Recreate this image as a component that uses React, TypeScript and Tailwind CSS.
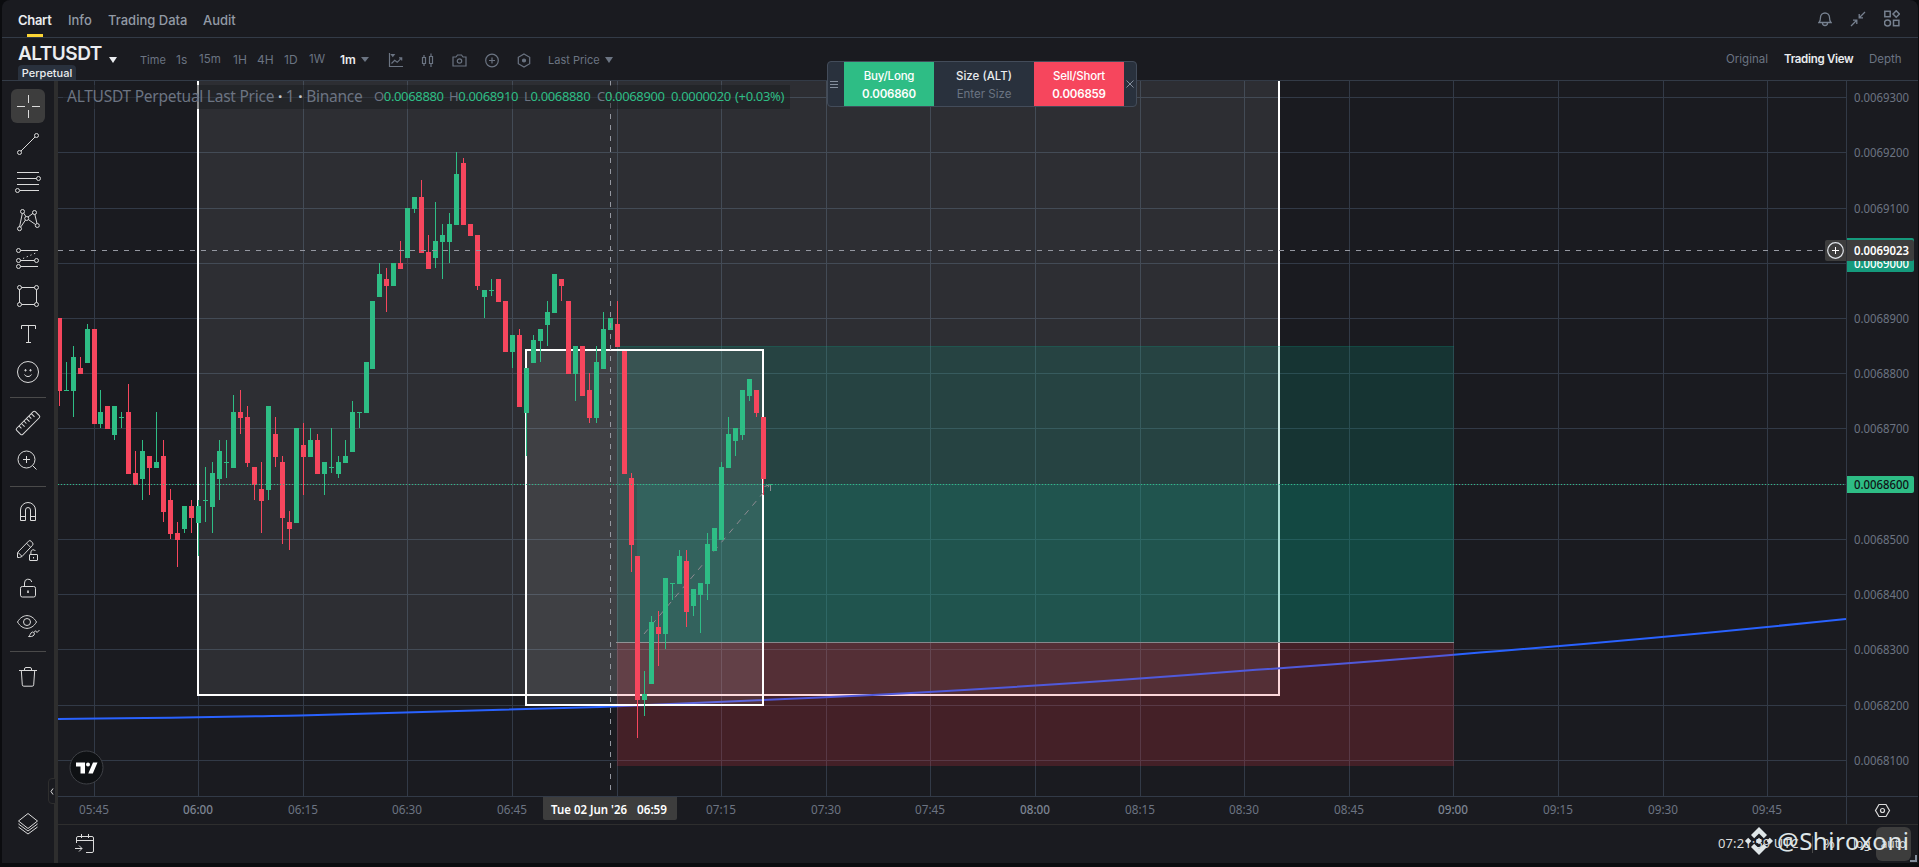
import React from 'react';

const UP = '#2ebd85';
const DOWN = '#f6465d';
const GRID = '#323a47';

// [open, high, low, close] in ticks of 0.000001 above 0.0068000, one candle per minute from 05:40
const CANDLES: number[][] = [
  [90, 90, 74, 77], [77, 82, 77, 77], [77, 85, 72, 83], [81, 83, 80, 80], [82, 89, 82, 88],
  [88, 88, 71, 71], [71, 77, 70, 73], [74, 74, 70, 70], [69, 74, 68, 74], [72, 73, 70, 72],
  [73, 78, 62, 62], [62, 66, 60, 60], [61, 68, 57, 66], [65, 65, 58, 63], [63, 73, 63, 64],
  [65, 68, 53, 55], [57, 59, 50, 51], [51, 53, 45, 50], [52, 56, 51, 56], [56, 57, 51, 54],
  [53, 57, 47, 56], [57, 63, 53, 57], [56, 64, 51, 62], [61, 68, 57, 66], [64, 68, 61, 64],
  [63, 76, 63, 73], [73, 77, 69, 72], [72, 74, 63, 64], [63, 63, 57, 60], [59, 64, 51, 57],
  [59, 74, 57, 74], [69, 72, 63, 65], [64, 65, 49, 54], [53, 55, 48, 52], [53, 70, 53, 70],
  [67, 71, 58, 65], [65, 70, 65, 68], [68, 69, 62, 62], [62, 64, 58, 64], [63, 70, 62, 63],
  [62, 65, 61, 64], [64, 68, 64, 65], [66, 75, 66, 73], [73, 73, 70, 73], [73, 82, 73, 82],
  [81, 93, 81, 93], [94, 100, 94, 98], [97, 99, 91, 96], [96, 100, 96, 100], [100, 104, 99, 99],
  [101, 110, 101, 110], [110, 112, 109, 112], [112, 115, 102, 102], [102, 105, 99, 99], [101, 111, 99, 104],
  [104, 107, 97, 105], [104, 109, 100, 107], [107, 120, 107, 116], [118, 119, 107, 107], [107, 107, 105, 105],
  [105, 105, 95, 96], [94, 95, 90, 95], [95, 97, 94, 95], [97, 97, 93, 93], [93, 93, 84, 84],
  [84, 87, 81, 87], [87, 88, 74, 74], [73, 81, 65, 81], [82, 87, 82, 86], [86, 88, 82, 88],
  [89, 93, 85, 91], [91, 98, 91, 98], [97, 97, 93, 96], [93, 93, 80, 80], [80, 85, 75, 85],
  [85, 85, 76, 76], [77, 80, 71, 72], [72, 85, 71, 82], [81, 91, 81, 88], [88, 90, 88, 90],
  [89, 93, 85, 85], [84, 84, 62, 62], [61, 62, 44, 49], [47, 47, 14, 21], [21, 26, 18, 22],
  [24, 36, 24, 35], [34, 37, 27, 33], [33, 43, 30, 43], [42, 42, 39, 42], [42, 48, 42, 47],
  [46, 48, 34, 37], [38, 41, 36, 41], [40, 42, 33, 42], [42, 51, 39, 49], [48, 52, 48, 52],
  [50, 64, 50, 63], [63, 72, 63, 69], [68, 70, 65, 70], [69, 77, 68, 77], [76, 79, 75, 79],
  [77, 77, 72, 73], [72, 72, 58, 61], [60, 60, 60, 60],
];

const PRICES = [130, 120, 110, 100, 90, 80, 70, 60, 50, 40, 30, 20, 10];
const TIMES = [
  '05:45', '06:00', '06:15', '06:30', '06:45', '', '07:15', '07:30', '07:45',
  '08:00', '08:15', '08:30', '08:45', '09:00', '09:15', '09:30', '09:45',
];

const xAt = (minute: number) => Math.ceil(58.156 + 6.974 * minute);
const yAt = (tick: number) => Math.round(97.1 + (130 - tick) * 5.523);
const formatPrice = (tick: number) => `0.00${68000 + tick * 10}`;

const Chart: React.FC = () => (
  <svg className="block h-[715px] w-[1788px]" viewBox="58 81 1788 715" shapeRendering="crispEdges">
    <rect x="58" y="81" width="1788" height="715" fill="#1a1b20" />

    {PRICES.map((p) => (
      <rect key={p} x="58" y={yAt(p)} width="1788" height="1" fill={GRID} />
    ))}
    {TIMES.map((_, i) => (
      <rect key={i} x={xAt(5 + i * 15)} y="81" width="1" height="715" fill={GRID} />
    ))}

    {/* outer range box */}
    <rect x="198" y="81" width="1081" height="614" fill="#fff" fillOpacity="0.088" />
    <path d="M198 81V695H1279V81" fill="none" stroke="#fff" strokeWidth="2" />

    {/* moving average */}
    <path
      d="M58 719C150 718.5 220 717 300 715.5C400 713 500 710.5 600 707C680 704 750 700.5 820 697.5C960 691 1100 682 1240 671C1320 665.500 1400 659.500 1480 652.500C1600 643 1720 632 1846 619"
      fill="none"
      stroke="#2962ff"
      strokeWidth="2"
      shapeRendering="auto"
    />

    {/* long position */}
    <rect x="617" y="346" width="837" height="296" fill="#089981" fillOpacity="0.2" />
    <rect x="617" y="346" width="837" height="1" fill="#089981" fillOpacity="0.2" />
    <rect x="637" y="484" width="817" height="158" fill="#089981" fillOpacity="0.2" />
    <rect x="617" y="643" width="837" height="123" fill="#f23645" fillOpacity="0.2" />
    <rect x="616" y="642" width="838" height="1" fill="#87888c" />

    {/* inner range box */}
    <rect x="526" y="350" width="237" height="355" fill="#fff" fillOpacity="0.088" />
    <rect x="526" y="350" width="237" height="355" fill="none" stroke="#fff" strokeWidth="2" />
    <path d="M644 634L769 486" stroke="#8f8b92" strokeDasharray="6 6" shapeRendering="auto" />
    <path d="M764.500 486.500L770.500 484.500V491" fill="none" stroke="#8f8b92" shapeRendering="auto" />

    {CANDLES.map(([open, high, low, close], i) => {
      const x = xAt(i);
      const color = close >= open ? UP : DOWN;
      const top = yAt(Math.max(open, close));
      const bottom = yAt(Math.min(open, close)) + 1;
      return (
        <g key={i} fill={color}>
          <rect x={x} y={yAt(high)} width="1" height={yAt(low) - yAt(high)} />
          <rect x={x - 2} y={top} width="5" height={bottom - top} />
        </g>
      );
    })}

    <path d="M58 484.500H1846" stroke={UP} strokeDasharray="1 2" />
    <path d="M58 250.500H1846" stroke="#9598a1" strokeDasharray="5 6" />
    <path d="M610.500 81V796" stroke="#9598a1" strokeDasharray="5 6" />
  </svg>
);

const PriceAxis: React.FC = () => (
  <svg
    className="block h-[715px] w-[72px] overflow-visible"
    viewBox="1846 81 72 715"
    fontFamily="'Noto Sans', sans-serif"
    fontSize="12"
  >
    <rect x="1846" y="81" width="1" height="715" fill={GRID} />
    {PRICES.filter((p) => p !== 100 && p !== 60).map((p) => (
      <text key={p} x="1854" y={yAt(p) + 4.5} fill="#6c7482" textLength="55" lengthAdjust="spacingAndGlyphs">
        {formatPrice(p)}
      </text>
    ))}
    <path d="M1847 238h65a2 2 0 0 1 2 2v30a2 2 0 0 1-2 2h-65z" fill="#159a7c" />
    <text x="1854" y="268" fill="#fff" fontWeight="500" textLength="55" lengthAdjust="spacingAndGlyphs">0.0069000</text>
    <rect x="1825" y="240" width="89" height="21" rx="2" fill="#3d3d3d" />
    <rect x="1846" y="240" width="1" height="21" fill="#2c2f35" />
    <circle cx="1835.500" cy="250.500" r="7.800" fill="none" stroke="#dfe3e8" strokeWidth="1.200" />
    <path d="M1832 250.500h7M1835.500 247v7" stroke="#fff" />
    <text x="1854" y="255" fill="#fff" fontWeight="600" textLength="55" lengthAdjust="spacingAndGlyphs">0.0069023</text>
    <path d="M1847 476h65a2 2 0 0 1 2 2v13a2 2 0 0 1-2 2h-65z" fill={UP} />
    <text x="1854" y="489" fill="#101215" fontWeight="500" textLength="55" lengthAdjust="spacingAndGlyphs">0.0068600</text>
  </svg>
);

const TimeAxis: React.FC = () => (
  <svg
    className="block h-[28px] w-[1860px]"
    viewBox="58 796 1860 28"
    fontFamily="'Noto Sans', sans-serif"
    fontSize="12"
  >
    <rect x="58" y="796" width="1860" height="1" fill={GRID} />
    <rect x="1846" y="796" width="1" height="28" fill={GRID} />
    {TIMES.map((t, i) => (
      <text
        key={i}
        x={xAt(5 + i * 15) - 15}
        y="814"
        fill={t.endsWith(':00') ? '#7d8593' : '#6c7482'}
        fontWeight={t.endsWith(':00') ? 500 : 400}
        textLength="30"
        lengthAdjust="spacingAndGlyphs"
      >
        {t}
      </text>
    ))}
    <path d="M543 797h134v21a2 2 0 0 1-2 2h-130a2 2 0 0 1-2-2z" fill="#3d3d3d" />
    <text x="551" y="814" fill="#fff" fontWeight="600" textLength="76" lengthAdjust="spacingAndGlyphs">Tue 02 Jun '26</text>
    <text x="637" y="814" fill="#fff" fontWeight="600" textLength="30" lengthAdjust="spacingAndGlyphs">06:59</text>
    <g fill="none" stroke="#dbdbdb" strokeWidth="1.200">
      <path d="M1879 804.500h7l3.500 6-3.500 6h-7l-3.500-6z" />
      <circle cx="1882.500" cy="810.500" r="2" />
    </g>
  </svg>
);

const Tool: React.FC<{ active?: boolean; children: React.ReactNode }> = ({ active, children }) => (
  <div className="flex h-[38px] w-full items-center justify-center">
    <div className={active ? 'flex h-[34px] w-[34px] items-center justify-center rounded-md bg-[#3d3d3d]' : 'flex'}>
      <svg width="28" height="28" viewBox="0 0 28 28" fill="none" stroke="#dbdbdb" strokeWidth="1">
        {children}
      </svg>
    </div>
  </div>
);

const Separator = () => (
  <div className="flex h-[13px] items-center justify-center">
    <div className="h-px w-[36px] bg-[#4a4a4a]" />
  </div>
);

const Toolbar: React.FC = () => (
  <div className="flex w-[52px] flex-col pt-[6px]">
    <Tool active>
      <path d="M14.500 3v8M14.500 18v8M3 14.500h8M18 14.500h8" />
    </Tool>
    <Tool>
      <path d="M7 21L21 7" />
      <circle cx="5.500" cy="22.500" r="2" />
      <circle cx="22.500" cy="5.500" r="2" />
    </Tool>
    <Tool>
      <path d="M3 4.500h22M3 10.500h19.500M3 16.500h22M6 22.500h19" />
      <circle cx="24.500" cy="10.500" r="2" />
      <circle cx="3.500" cy="22.500" r="2" />
    </Tool>
    <Tool>
      <path d="M5.500 21L8.300 7.500M9.800 7.200l2.200 3.600M14 11l5-3.700M20.800 8.300l2.200 9.200M21.500 18.500L14.300 13.500M11.500 14l-5 7.300" />
      <circle cx="8.500" cy="5.500" r="2" />
      <circle cx="20.500" cy="6.500" r="2" />
      <circle cx="12.700" cy="12.500" r="2" />
      <circle cx="5.500" cy="22.700" r="2" />
      <circle cx="23.300" cy="19.500" r="2" />
    </Tool>
    <Tool>
      <path d="M6.500 6.500H24M6.500 16.500H20.500M6.500 22.500H24" />
      <path d="M9 14.500L23 8.500" strokeDasharray="1.300 2.700" />
      <circle cx="4.500" cy="6.500" r="2" />
      <circle cx="4.500" cy="16.500" r="2" />
      <circle cx="4.500" cy="22.500" r="2" />
      <circle cx="22.500" cy="16.500" r="2" />
    </Tool>
    <Tool>
      <path d="M7.500 5.500h13M7.500 22.500h13M5.500 7.500v13M22.500 7.500v13" />
      <circle cx="5.500" cy="5.500" r="2" />
      <circle cx="22.500" cy="5.500" r="2" />
      <circle cx="5.500" cy="22.500" r="2" />
      <circle cx="22.500" cy="22.500" r="2" />
    </Tool>
    <Tool>
      <path d="M7.500 9V5.500h14V9M14.500 5.500v17M12 22.500h5" />
    </Tool>
    <Tool>
      <circle cx="14" cy="14" r="10.500" />
      <path d="M10.500 16.500c1.500 2.700 5.500 2.700 7 0" />
      <circle cx="11.500" cy="12.300" r="0.700" fill="#dbdbdb" />
      <circle cx="16.500" cy="12.300" r="0.700" fill="#dbdbdb" />
    </Tool>
    <Separator />
    <Tool>
      <g transform="rotate(-45 14 14)">
        <rect x="0.800" y="9.700" width="26.400" height="8.600" rx="1.500" />
        <path d="M5.500 9.700v3.500M9 9.700v4.500M12.500 9.700v3.500M16 9.700v4.500M19.500 9.700v3.500M23 9.700v4.500" />
      </g>
    </Tool>
    <Tool>
      <circle cx="12.500" cy="12.500" r="8.500" />
      <path d="M9 12.500h7M12.500 9v7M18.500 18.500l4 4" />
    </Tool>
    <Separator />
    <Tool>
      <path d="M6.500 22.500V12a7.500 7.500 0 0 1 15 0v10.500h-5V12a2.500 2.500 0 0 0-5 0v10.500zM6.500 18.500h5M16.500 18.500h5" />
    </Tool>
    <Tool>
      <path d="M3.500 21.500v-5L14.500 5.200a1.800 1.800 0 0 1 2.600 0l1.400 1.600a1.800 1.800 0 0 1 0 2.500L8 20.500l-2.500 1zM12.500 7.200l4 4M4 16.500l4.200 4" />
      <rect x="15.500" y="18.500" width="8" height="6" rx="0.500" />
      <path d="M16.900 18.500v-2.500a2.400 2.400 0 0 1 4.500-1M19.500 21v1.500" />
    </Tool>
    <Tool>
      <rect x="6.500" y="12.500" width="15" height="10.500" rx="1.800" />
      <path d="M10.500 12.500V9a3.700 3.700 0 0 1 7.300-1" />
      <path d="M14 16.500v2.500" strokeWidth="1.600" />
    </Tool>
    <Tool>
      <path d="M3.500 10c5-8.500 14-8.500 19 0c-5 8.500-14 8.500-19 0z" />
      <circle cx="13" cy="10" r="3.500" />
      <path d="M14.500 24.500c1.800-.3 1.500-4 4-4.500 1.600 0 2.400 1.600 1.500 3-1 1.500-3.500 1.800-5.500 1.500zM20 20.500l1.500-1.800 1.500 1.800 2.500-2.500" />
    </Tool>
    <Separator />
    <Tool>
      <path d="M5 7.500h18M10.500 7.500V6a1.500 1.500 0 0 1 1.500-1.500h4A1.500 1.500 0 0 1 17.500 6v1.500M7.300 7.500l1 14.300a1.500 1.500 0 0 0 1.500 1.400h8.400a1.500 1.500 0 0 0 1.500-1.400l1-14.300" />
    </Tool>
    <div className="mt-auto mb-[20px]">
      <Tool>
        <path d="M14 3.500l9.500 7.500L14 18.500 4.500 11zM4.800 13.700L4.500 14l9.500 7 9.500-7-.3-.3M4.500 17l9.500 7 9.500-7" />
      </Tool>
    </div>
  </div>
);

const OrderPanel: React.FC = () => (
  <div className="absolute top-[61px] left-[827px] z-10 flex h-[46px] w-[310px] overflow-hidden rounded border border-[#434c5a] bg-[#29313d] text-center text-[11.500px] leading-[18px] font-medium text-[#eaecef]">
    <div className="flex w-[16px] items-center pl-[2px]">
      <svg width="8" height="9" stroke="#848e9c"><path d="M0 1.500h8M0 4.500h8M0 7.500h8" /></svg>
    </div>
    <div className="w-[90px] bg-[#2ebd85] pt-[5px] text-white">
      <div className="tracking-[-0.2px]">Buy/Long</div>
      <div className="font-semibold tracking-[-0.2px]">0.006860</div>
    </div>
    <div className="w-[100px] pt-[5px]">
      <div>Size (ALT)</div>
      <div className="font-normal text-[#6b7482]">Enter Size</div>
    </div>
    <div className="w-[90px] bg-[#f6465d] pt-[5px] text-white">
      <div className="tracking-[-0.2px]">Sell/Short</div>
      <div className="font-semibold tracking-[-0.2px]">0.006859</div>
    </div>
    <div className="flex flex-1 items-center justify-center">
      <svg width="8" height="8" stroke="#848e9c"><path d="M.5.5l7 7M7.500.5l-7 7" /></svg>
    </div>
  </div>
);

const Legend: React.FC = () => (
  <div className="absolute top-[4px] left-[5px] flex h-[24px] w-[727px] items-center bg-[#1a1b20]/50 pl-[4px] font-['Noto_Sans',sans-serif] text-[13px] tracking-[-0.35px] whitespace-nowrap text-[#6c7482]">
    <span className="w-[307px] text-[15.500px] tracking-[-0.25px]">ALTUSDT Perpetual Last Price <b className="text-[#c5c9d0]">·</b> 1 <b className="text-[#c5c9d0]">·</b> Binance</span>
    <span className="w-[75px]">O<span className="text-[#2ebd85]">0.0068880</span></span>
    <span className="w-[75px]">H<span className="text-[#2ebd85]">0.0068910</span></span>
    <span className="w-[73px]">L<span className="text-[#2ebd85]">0.0068880</span></span>
    <span className="w-[74px]">C<span className="text-[#2ebd85]">0.0068900</span></span>
    <span className="w-[64px] text-[#2ebd85]">0.0000020</span>
    <span className="text-[#2ebd85]">(+0.03%)</span>
  </div>
);

const TopTabs: React.FC = () => (
  <div className="flex h-[38px] items-center border-b border-[#333b47] pl-[16px] text-[13px] font-medium text-[#929aa5]">
    <div className="relative flex h-full w-[50px] items-center pt-[5px] text-[#eaecef]">
      <span className="font-semibold tracking-[-0.3px]">Chart</span>
      <span className="absolute bottom-0 left-[9px] h-[3px] w-[16px] bg-[#fcd535]" />
    </div>
    <div className="w-[40px] pt-[5px]">Info</div>
    <div className="w-[95px] pt-[5px]">Trading Data</div>
    <div className="pt-[5px]">Audit</div>
    <div className="ml-auto flex items-center gap-[18px] pr-[18px]">
      <svg width="14" height="16" viewBox="0 0 14 16" fill="none" stroke="#76808f" strokeWidth="1.300">
        <path d="M1 11.500h12c-1.500-1.500-1.500-2.500-1.500-5a4.500 4.500 0 0 0-9 0c0 2.500 0 3.500-1.500 5zM4.500 12a2.500 2.500 0 0 0 5 0" />
      </svg>
      <svg width="16" height="16" viewBox="0 0 16 16" fill="none" stroke="#76808f" strokeWidth="1.300">
        <path d="M1 15l5.500-5.500M3 9.200h3.800V13M15 1L9.500 6.500M13 6.800H9.200V3" />
      </svg>
      <svg width="16" height="17" viewBox="0 0 16 17" fill="none" stroke="#76808f" strokeWidth="1.500">
        <rect x="0.800" y="1.300" width="5.400" height="5.400" />
        <path d="M12.200.8l3.200 3.200-3.200 3.200L9 4z" />
        <circle cx="3.500" cy="13" r="3" />
        <rect x="9.500" y="10.300" width="5.400" height="5.400" />
      </svg>
    </div>
  </div>
);

const SymbolBar: React.FC = () => (
  <div className="flex h-[43px] border-b border-[#333b47] pl-[16px] text-[12px] text-[#6b7482]">
    <div className="flex w-[122px] flex-col">
      <div className="flex h-[27px] items-end">
        <span className="w-[90px] text-[19px] leading-[22px] font-semibold tracking-[-0.5px] text-[#eaecef]">ALTUSDT</span>
        <svg className="mb-[2px]" width="10" height="6" fill="#eaecef"><path d="M1 0h8L5 6z" /></svg>
      </div>
      <span className="h-[15px] w-[58px] rounded-t-sm bg-[#29313d] text-center text-[11px] leading-[17px] font-medium text-[#eaecef]">Perpetual</span>
    </div>
    <div className="flex items-center pt-[2px]">
      <span className="w-[36px] text-[11px]">Time</span>
      <span className="w-[23px]">1s</span>
      <span className="w-[34px] text-[11.500px]">15m</span>
      <span className="w-[24px]">1H</span>
      <span className="w-[27px]">4H</span>
      <span className="w-[25px]">1D</span>
      <span className="w-[31px] text-[11.500px]">1W</span>
      <span className="w-[21px] font-semibold text-[#eaecef]">1m</span>
      <svg className="mr-[19px]" width="8" height="6" fill="#6b7482"><path d="M0 0h8L4 5z" /></svg>
      <svg className="mr-[18px]" width="15" height="15" fill="none" stroke="#6b7482" strokeWidth="1.200">
        <path d="M1.500 0v13.500H15M3.500 10.500l3.200-3.200 2.500 2 4.500-4.500M13.700 7.500V4.800H11M3.500 1.500h2.600L4.800 3.200z" />
      </svg>
      <svg className="mr-[17px]" width="14" height="15" fill="none" stroke="#6b7482" strokeWidth="1.200">
        <path d="M1.500 4.500h3v6h-3zM3 2v2.500M3 10.500V13M8.500 3.500h3v7h-3zM10 .5v3M10 10.500v3.500" />
      </svg>
      <svg className="mr-[18px]" width="15" height="15" fill="none" stroke="#6b7482" strokeWidth="1.200">
        <path d="M1 4h3l1.500-2h4L11 4h3v9H1z" />
        <circle cx="7.500" cy="8" r="2.200" />
      </svg>
      <svg className="mr-[18px]" width="14" height="15" fill="none" stroke="#6b7482" strokeWidth="1.200">
        <circle cx="7" cy="7.500" r="6.300" />
        <path d="M4 7.500h6M7 4.500v6" />
      </svg>
      <svg className="mr-[17px]" width="14" height="15" fill="none" stroke="#6b7482" strokeWidth="1.200">
        <path d="M7 1l5.700 3.300v6.400L7 14l-5.700-3.300V4.300z" />
        <circle cx="7" cy="7.500" r="1.500" fill="#6b7482" />
      </svg>
      <span className="w-[57px] text-[11px] whitespace-nowrap">Last Price</span>
      <svg width="8" height="6" fill="#6b7482"><path d="M0 0h8L4 6z" /></svg>
    </div>
    <div className="ml-auto flex items-center pt-[2px] text-[11.500px] whitespace-nowrap">
      <span className="w-[58px]">Original</span>
      <span className="w-[85px] font-semibold tracking-[-0.3px] text-[#eaecef]">Trading View</span>
      <span className="w-[49px]">Depth</span>
    </div>
  </div>
);

const BottomBar: React.FC = () => (
  <div className="relative flex h-[39px] items-center border-t border-[#2e2e2e] pl-[17px] font-['Noto_Sans',sans-serif] text-[13px] text-[#dbdbdb]">
    <svg width="20" height="20" fill="none" stroke="#dbdbdb">
      <path d="M1.500 9V4A1.500 1.500 0 0 1 3 2.500h14A1.500 1.500 0 0 1 18.500 4v13a1.500 1.500 0 0 1-1.500 1.500h-6M1.500 6.500h17M6.500 0v4M13.500 0v4M0 14.500h7M4 11.500l3 3-3 3" />
    </svg>
    <div className="ml-auto flex items-center whitespace-nowrap">
      <span className="w-[94px] tracking-[0.1px]">07:21:59 UTC</span>
      <span className="h-[17px] w-[12px] border-l border-[#4a4a4a]" />
      <span className="w-[29px]">%</span>
      <span className="w-[23px] text-[12px]">log</span>
      <span className="mr-[7px] flex h-[34px] w-[35px] items-center justify-center rounded-md bg-[#3d3d3d] text-[12px]">auto</span>
    </div>
    {/* watermark */}
    <div className="absolute top-[2px] left-[1687px] flex items-center font-['Noto_Sans',sans-serif] text-[24px] leading-[28px] tracking-[0.55px] text-[#dfe6e8]">
      <svg width="28" height="28" viewBox="0 0 28 28" fill="#dfe6e8">
        <path d="M14 0l8 8-3.200 3.200L14 6.400l-4.800 4.800L6 8zM3.200 10.800L6.400 14l-3.200 3.200L0 14zM24.800 10.800L28 14l-3.200 3.200L21.600 14zM14 10.800l3.200 3.200-3.200 3.200-3.200-3.200zM9.200 16.800l4.800 4.800 4.800-4.800L22 20l-8 8-8-8z" />
      </svg>
      <span className="ml-[4px]">@Shiroxoni</span>
    </div>
    <svg className="absolute right-[1px] bottom-[1px]" width="7" height="7" stroke="#848e9c" strokeWidth="2" fill="none">
      <path d="M6 0v6H0" />
    </svg>
  </div>
);

const App: React.FC = () => {
  return (
    <div className="relative h-[867px] w-[1919px] overflow-hidden bg-[#0b0c0f] pr-px pl-[2px] font-['Inter',sans-serif]">
      <div className="flex h-[863px] flex-col overflow-hidden rounded-t-lg bg-[#1a1b20]">
        <TopTabs />
        <SymbolBar />
        <div className="relative flex flex-1">
          <Toolbar />
          <div className="w-[4px] bg-[#2e2e2e]" />
          <div className="relative flex flex-col">
            <div className="flex">
              <Chart />
              <PriceAxis />
            </div>
            <TimeAxis />
            <BottomBar />
            <Legend />
            <svg className="absolute top-[669px] left-[11px]" width="35" height="35" viewBox="0 0 35 35" fill="#fff">
              <circle cx="17.500" cy="17.500" r="16.500" fill="#0f1114" stroke="#3f4146" />
              <path d="M7 12.500h9v11h-4.500v-7H7zM24 12.500h4.500l-4.700 11h-4.500z" />
              <circle cx="19" cy="14.500" r="2" />
            </svg>
          </div>
          <div className="absolute top-[697px] left-[46px] flex h-[26px] w-[8px] items-center justify-center rounded-l border border-[#2e2e2e] bg-[#1a1b20]">
            <svg width="4" height="7" fill="none" stroke="#dbdbdb"><path d="M3 .5l-2 3 2 3" /></svg>
          </div>
        </div>
      </div>
      <OrderPanel />
    </div>
  );
};

export default App;
